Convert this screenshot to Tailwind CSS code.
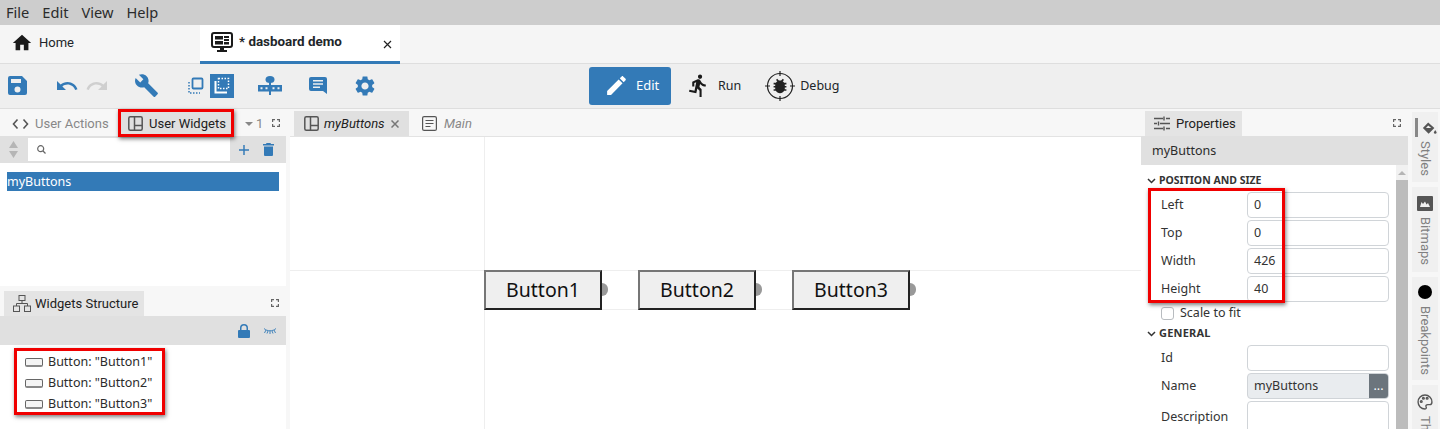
<!DOCTYPE html>
<html lang="en">
<head>
<meta charset="UTF-8">
<title>dasboard demo</title>
<script src="https://cdn.jsdelivr.net/npm/@tailwindcss/browser@4"></script>
</head>
<body class="bg-white">
<div class="relative w-[1440px] h-[429px] overflow-hidden font-['Noto_Sans',sans-serif] text-[#212529]">

  <!-- menu -->
  <div class="h-[25px] bg-[#cdcdcd] flex items-center pl-[6px] gap-[13px] text-[14.6px] text-[#2b2b2b]">
    <span>File</span><span>Edit</span><span>View</span><span>Help</span>
  </div>

  <!-- doc tabs -->
  <div class="h-[39px] bg-[#f5f5f5] border-b border-[#dedede] flex font-['Roboto',sans-serif] text-[13px]">
    <div class="w-[200px] flex items-center pl-[11px] gap-[6px] pb-[3px]">
      <svg class="w-[22px] h-[22px]" viewBox="0 0 24 24" fill="#1a1a1a"><path d="M10 20v-6h4v6h5v-8h3L12 3 2 12h3v8z"/></svg>
      <span>Home</span>
    </div>
    <div class="relative w-[200px] h-[39px] bg-white border-b-[3px] border-[#337ab7] flex items-center pl-[11px] pb-[2px] gap-[6px]">
      <svg class="w-[22px] h-[22px]" viewBox="0 0 22 22"><rect x="1" y="2" width="20" height="14" rx="2" fill="none" stroke="#1a1a1a" stroke-width="2"/><path d="M4 5h8v3.500H4zM13 5h5v2h-5zM13 8h5v2h-5zM4 10h8v3.500H4zM13 11h5v2.500h-5z" fill="#1a1a1a"/><path d="M9 16h4v3h3v2H6v-2h3z" fill="#1a1a1a"/></svg>
      <span class="font-bold text-[13.4px]">* dasboard demo</span>
      <svg class="absolute right-[8px] top-[15px] w-[9px] h-[9px]" viewBox="0 0 9 9" stroke="#222" stroke-width="1.200"><path d="M1 1l7 7M8 1l-7 7"/></svg>
    </div>
  </div>

  <!-- toolbar -->
  <div class="relative h-[45px] bg-[#efefef] border-b border-[#dedede] flex items-center pl-[7px] pb-[1px]">
    <svg class="w-[21px] h-[21px]" viewBox="0 0 21 21" fill="#337ab7"><path fill-rule="evenodd" d="M3 1h12l5 5v12a2 2 0 0 1-2 2H3a2 2 0 0 1-2-2V3a2 2 0 0 1 2-2zm1 3v4h10V4zm6.500 7.500a3 3 0 1 0 0 6 3 3 0 0 0 0-6z"/></svg>
    <svg class="w-[24px] h-[24px] ml-[27px]" viewBox="0 0 24 24" fill="#337ab7"><path d="M12.500 8c-2.650 0-5.050.99-6.900 2.600L2 7v9h9l-3.620-3.620c1.390-1.160 3.160-1.880 5.120-1.880 3.540 0 6.550 2.310 7.600 5.500l2.370-.78C21.080 11.030 17.150 8 12.500 8z"/></svg>
    <svg class="w-[24px] h-[24px] ml-[6px] -scale-x-100" viewBox="0 0 24 24" fill="#cfcfcf"><path d="M12.500 8c-2.650 0-5.050.99-6.900 2.600L2 7v9h9l-3.620-3.620c1.390-1.160 3.160-1.880 5.120-1.880 3.540 0 6.550 2.310 7.600 5.500l2.370-.78C21.080 11.030 17.150 8 12.500 8z"/></svg>
    <svg class="w-[25px] h-[25px] ml-[25px]" viewBox="0 0 24 24" fill="#337ab7"><path d="M22.700 19l-9.100-9.100c.9-2.300.4-5-1.500-6.900-2-2-5-2.400-7.400-1.300L9 6 6 9 1.600 4.700C.4 7.100.9 10.100 2.900 12.100c1.900 1.900 4.600 2.400 6.900 1.500l9.100 9.100c.4.4 1 .4 1.400 0l2.300-2.300c.5-.4.5-1.100.1-1.400z"/></svg>
    <svg class="w-[16px] h-[17px] ml-[29px]" viewBox="0 0 16 17" fill="none" stroke="#337ab7"><rect x="4.500" y="1.500" width="10" height="10" rx="1" stroke-width="1.800"/><path d="M1 5v11h11" stroke-width="1.500" stroke-dasharray="1.500 1.500"/></svg>
    <div class="w-[24px] h-[24px] ml-[6px] bg-[#337ab7] flex items-center justify-center">
      <svg class="w-[16px] h-[17px]" viewBox="0 0 16 17" fill="none" stroke="#fff"><rect x="4.500" y="1.500" width="10" height="10" stroke-width="1.500" stroke-dasharray="1.500 1.500"/><path d="M1.500 4v11.500H13" stroke-width="2"/></svg>
    </div>
    <svg class="w-[24px] h-[20px] ml-[24px]" viewBox="0 0 24 20" fill="#337ab7"><ellipse cx="12" cy="3.500" rx="4.500" ry="3.500"/><path d="M11 5h2v14h-2z"/><path fill-rule="evenodd" d="M0 9h24v6.500H0zM2.500 11.200v2h2v-2zm5 0v2h2v-2zm7 0v2h2v-2zm5 0v2h2v-2z"/></svg>
    <svg class="w-[18px] h-[19px] ml-[27px]" viewBox="0 0 18 19" fill="#337ab7"><path fill-rule="evenodd" d="M2 1h14a2 2 0 0 1 2 2v15l-4-3H2a2 2 0 0 1-2-2V3a2 2 0 0 1 2-2zm2 3v1.500h10V4zm0 3.200v1.500h10V7.200zm0 3.200v1.500h7v-1.500z"/></svg>
    <svg class="w-[24px] h-[24px] ml-[26px]" viewBox="0 0 24 24" fill="#337ab7"><path d="M19.140 12.940c.04-.3.06-.61.06-.94 0-.32-.02-.64-.07-.94l2.030-1.580c.18-.14.23-.41.12-.61l-1.920-3.320c-.12-.22-.37-.29-.59-.22l-2.390.96c-.5-.38-1.030-.7-1.620-.94l-.36-2.540c-.04-.24-.24-.41-.48-.41h-3.840c-.24 0-.43.17-.47.41l-.36 2.540c-.59.24-1.130.57-1.620.94l-2.390-.96c-.22-.08-.47 0-.59.22L2.740 8.870c-.12.21-.08.47.12.61l2.030 1.580c-.05.3-.09.63-.09.94s.02.64.07.94l-2.030 1.580c-.18.14-.23.41-.12.61l1.920 3.320c.12.22.37.29.59.22l2.390-.96c.5.38 1.030.7 1.620.94l.36 2.540c.05.24.24.41.48.41h3.840c.24 0 .44-.17.47-.41l.36-2.540c.59-.24 1.130-.56 1.620-.94l2.390.96c.22.08.47 0 .59-.22l1.920-3.320c.12-.22.07-.47-.12-.61l-2.010-1.580zM12 15.600c-1.980 0-3.600-1.620-3.600-3.600s1.620-3.600 3.600-3.600 3.600 1.620 3.600 3.600-1.620 3.600-3.600 3.600z"/></svg>

    <div class="w-[82px] h-[38px] ml-[212px] rounded-[3px] bg-[#337ab7] text-white flex items-center pl-[15px] gap-[7px] text-[13px]">
      <svg class="w-[25px] h-[25px]" viewBox="0 0 24 24" fill="#fff"><path d="M3 17.250V21h3.750L17.810 9.940l-3.750-3.750L3 17.250zM20.710 7.040c.39-.39.39-1.020 0-1.410l-2.340-2.340c-.39-.39-1.020-.39-1.410 0l-1.830 1.830 3.750 3.750 1.830-1.830z"/></svg>
      <span>Edit</span>
    </div>
    <svg class="w-[25px] h-[25px] ml-[15px]" viewBox="0 0 24 24" fill="#1a1a1a"><path d="M13.490 5.480c1.100 0 2-.9 2-2s-.9-2-2-2-2 .9-2 2 .9 2 2 2zm-3.600 13.900l1-4.400 2.100 2v6h2v-7.500l-2.100-2 .6-3c1.300 1.500 3.300 2.500 5.500 2.500v-2c-1.900 0-3.500-1-4.300-2.400l-1-1.600c-.4-.6-1-1-1.700-1-.3 0-.5.1-.8.1l-5.200 2.200v4.700h2v-3.400l1.800-.7-1.600 8.100-4.900-1-.4 2 7 1.400z"/></svg>
    <span class="ml-[7px] pt-[2px] text-[12.5px]">Run</span>
    <svg class="w-[30px] h-[30px] ml-[24px]" viewBox="0 0 30 30"><circle cx="15" cy="15" r="12.500" fill="none" stroke="#222" stroke-width="1.200"/><path d="M15 0v5M15 25v5M0 15h5M25 15h5" stroke="#222" stroke-width="1.200"/><path transform="translate(5.400 5.400) scale(.8)" fill="#222" d="M20 8h-2.810c-.45-.78-1.070-1.450-1.820-1.960L17 4.410 15.590 3l-2.170 2.170C12.960 5.060 12.490 5 12 5c-.49 0-.96.06-1.410.17L8.410 3 7 4.410l1.620 1.630C7.880 6.550 7.260 7.220 6.810 8H4v2h2.090c-.05.33-.09.66-.09 1v1H4v2h2v1c0 .34.04.67.09 1H4v2h2.810c1.040 1.790 2.970 3 5.190 3s4.150-1.210 5.190-3H20v-2h-2.090c.05-.33.09-.66.09-1v-1h2v-2h-2v-1c0-.34-.04-.67-.09-1H20V8z"/></svg>
    <span class="ml-[5px] pt-[2px] text-[12.5px]">Debug</span>
  </div>

  <!-- main -->
  <div class="flex h-[320px] bg-[#f7f7f7]">

    <!-- left -->
    <div class="w-[290px] shrink-0 flex flex-col">
      <div class="h-[27px] flex items-end font-['Roboto',sans-serif] text-[13px] w-[286px]">
        <div class="w-[119px] h-[25px] flex items-center pl-[12px] gap-[6px] text-[#888]">
          <svg class="w-[17px] h-[12px]" viewBox="0 0 17 12" fill="none" stroke="#555" stroke-width="1.600"><path d="M5.500 1.500L1.500 6l4 4.500M11.500 1.500l4 4.500-4 4.500"/></svg>
          <span>User Actions</span>
        </div>
        <div class="w-[115px] h-[25px] bg-[#e0e0e0] flex items-center pl-[9px] gap-[6px] text-[#212121]">
          <svg class="w-[15px] h-[15px]" viewBox="0 0 15 15" fill="none" stroke="#555" stroke-width="1.500"><rect x=".8" y=".8" width="13.400" height="13.400" rx="1.500"/><path d="M6.500 1v13M6.500 9.500H14"/></svg>
          <span>User Widgets</span>
        </div>
        <div class="h-[25px] flex items-center pl-[11px] text-[#888] gap-[3px]">
          <span class="w-0 h-0 border-x-[4px] border-x-transparent border-t-[4px] border-t-[#888]"></span><span>1</span>
        </div>
        <svg class="w-[8px] h-[8px] ml-[9px] mb-[9px]" viewBox="0 0 8 8" fill="none" stroke="#666" stroke-width="1.200"><path d="M.6 3V.6H3M5 .6h2.400V3M7.400 5v2.400H5M3 7.400H.6V5"/></svg>
      </div>
      <div class="w-[286px] h-[27px] bg-[#e0e0e0] flex items-center pl-[8px]">
        <svg class="w-[11px] h-[19px]" viewBox="0 0 11 19" fill="#b5b5b5"><path d="M5.500 1l4.500 7H1zM5.500 18l4.500-7H1z"/></svg>
        <div class="w-[202px] h-[23px] ml-[9px] bg-white flex items-center pl-[9px]">
          <svg class="w-[9px] h-[9px]" viewBox="0 0 9 9" fill="none" stroke="#666" stroke-width="1.200"><circle cx="3.700" cy="3.700" r="3"/><path d="M6 6l2.500 2.500"/></svg>
        </div>
        <svg class="w-[10px] h-[10px] ml-[9px]" viewBox="0 0 11 11" stroke="#337ab7" stroke-width="1.600"><path d="M5.500 0v11M0 5.500h11"/></svg>
        <svg class="w-[11px] h-[13px] ml-[14px]" viewBox="0 0 11 13" fill="#337ab7"><path d="M3.500 0h4l.5 1h3v1.500H0V1h3zM1 3.500h9V12a1 1 0 0 1-1 1H2a1 1 0 0 1-1-1z"/></svg>
      </div>
      <div class="w-[286px] h-[123px] bg-white pt-[9px] pl-[7px]">
        <div class="w-[272px] h-[19px] bg-[#337ab7] text-white text-[12.5px] leading-[19px]">myButtons</div>
      </div>
      <div class="w-[286px] h-[5px]"></div>
      <div class="w-[286px] h-[25px] flex justify-between items-end pl-[4px] pr-[7px] font-['Roboto',sans-serif] text-[13px] text-[#212121]">
        <div class="w-[140px] h-[25px] bg-[#e4e4e4] flex items-center pl-[9px] gap-[4px]">
          <svg class="w-[18px] h-[17px]" viewBox="0 0 18 17" fill="none" stroke="#555"><rect x="6" y=".5" width="6" height="5"/><rect x=".5" y="11" width="6" height="5.500"/><rect x="11.500" y="11" width="6" height="5.500"/><path d="M9 5.500v3M3.500 11V8.500h11V11"/></svg>
          <span>Widgets Structure</span>
        </div>
        <svg class="w-[8px] h-[8px] mb-[9px]" viewBox="0 0 8 8" fill="none" stroke="#666" stroke-width="1.200"><path d="M.6 3V.6H3M5 .6h2.400V3M7.400 5v2.400H5M3 7.400H.6V5"/></svg>
      </div>
      <div class="w-[286px] h-[29px] bg-[#e0e0e0] flex items-center justify-end pr-[9px] gap-[13px]">
        <svg class="w-[12px] h-[14px]" viewBox="0 0 12 14" fill="#337ab7"><path fill-rule="evenodd" d="M2 6V4a4 4 0 0 1 8 0v2h1a1 1 0 0 1 1 1v6a1 1 0 0 1-1 1H1a1 1 0 0 1-1-1V7a1 1 0 0 1 1-1zm1.500 0h5V4a2.500 2.500 0 0 0-5 0z"/></svg>
        <svg class="w-[14px] h-[7px]" viewBox="0 0 14 7" fill="none" stroke="#337ab7" stroke-width=".9"><path d="M1 1.500c3 3 9 3 12 0M3 3L1.500 6M7 4v3M11 3l1.500 3M5 4L4 6.500M9 4l1 2.500"/></svg>
      </div>
      <div class="w-[286px] flex-1 bg-white pt-[7px] pl-[25px] text-[12.5px] text-[#2b2b2b]">
        <div class="h-[21px] flex items-center gap-[5px]"><span class="w-[18px] h-[9px] rounded-[2px] border border-[#666] border-b-2 border-b-[#888] bg-[#f4f4f4]"></span><span>Button: "Button1"</span></div>
        <div class="h-[21px] flex items-center gap-[5px]"><span class="w-[18px] h-[9px] rounded-[2px] border border-[#666] border-b-2 border-b-[#888] bg-[#f4f4f4]"></span><span>Button: "Button2"</span></div>
        <div class="h-[21px] flex items-center gap-[5px]"><span class="w-[18px] h-[9px] rounded-[2px] border border-[#666] border-b-2 border-b-[#888] bg-[#f4f4f4]"></span><span>Button: "Button3"</span></div>
      </div>
    </div>

    <!-- center -->
    <div class="w-[851px] shrink-0 flex flex-col">
      <div class="h-[28px] flex items-end pl-[4px] font-['Roboto',sans-serif] text-[13px] italic border-b border-[#e3e3e3]">
        <div class="w-[115px] h-[25px] bg-[#e0e0e0] flex items-center pl-[10px] gap-[5px] text-[#212121]">
          <svg class="w-[15px] h-[15px]" viewBox="0 0 15 15" fill="none" stroke="#555" stroke-width="1.500"><rect x=".8" y=".8" width="13.400" height="13.400" rx="1.500"/><path d="M6.500 1v13M6.500 9.500H14"/></svg>
          <span>myButtons</span>
          <svg class="w-[8px] h-[8px] ml-[1px]" viewBox="0 0 8 8" stroke="#777" stroke-width="1.500"><path d="M.5.5l7 7M7.500.5l-7 7"/></svg>
        </div>
        <div class="h-[25px] flex items-center pl-[13px] gap-[7px] text-[#888]">
          <svg class="w-[15px] h-[15px]" viewBox="0 0 15 15" fill="none" stroke="#555" stroke-width="1.200"><rect x=".6" y=".6" width="13.800" height="13.800" rx="1.500"/><path d="M3.500 4.500h8M3.500 7.500h8M3.500 10.500h5"/></svg>
          <span>Main</span>
        </div>
      </div>
      <div class="relative flex-1 bg-white">
        <div class="absolute left-[194px] top-0 bottom-0 w-px bg-[#eeeeee]"></div>
        <div class="absolute left-0 right-0 top-[133px] h-px bg-[#eeeeee]"></div>
        <div class="absolute left-[194px] w-[426px] top-[172px] h-px bg-[#eeeeee]"></div>
        <div class="absolute left-[194px] top-[133px] flex gap-[36px] text-[19.5px]">
          <div class="relative w-[118px] h-[40px] bg-[#efefef] border-2 border-t-[#767676] border-l-[#767676] border-r-[#222] border-b-[#222] flex items-center justify-center text-[#111]">Button1<span class="absolute right-[-8px] top-[11px] w-[6px] h-[13px] rounded-r-full bg-[#999]"></span></div>
          <div class="relative w-[118px] h-[40px] bg-[#efefef] border-2 border-t-[#767676] border-l-[#767676] border-r-[#222] border-b-[#222] flex items-center justify-center text-[#111]">Button2<span class="absolute right-[-8px] top-[11px] w-[6px] h-[13px] rounded-r-full bg-[#999]"></span></div>
          <div class="relative w-[118px] h-[40px] bg-[#efefef] border-2 border-t-[#767676] border-l-[#767676] border-r-[#222] border-b-[#222] flex items-center justify-center text-[#111]">Button3<span class="absolute right-[-8px] top-[11px] w-[6px] h-[13px] rounded-r-full bg-[#999]"></span></div>
        </div>
      </div>
    </div>

    <!-- properties -->
    <div class="w-[267px] shrink-0 flex flex-col">
      <div class="h-[27px] flex justify-between items-end pl-[4px] pr-[7px]">
        <div class="w-[97px] h-[25px] bg-[#e4e4e4] flex items-center pl-[9px] gap-[6px] font-['Roboto',sans-serif] text-[13px] text-[#212121]">
          <svg class="w-[16px] h-[15px]" viewBox="0 0 16 15" stroke="#555" stroke-width="1.400" fill="none"><path d="M0 2.500h9M12 2.500h4M10 .5v4M0 7.500h3M6 7.500h10M4.500 5.500v4M0 12.500h9M12 12.500h4M10 10.500v4"/></svg>
          <span>Properties</span>
        </div>
        <svg class="w-[8px] h-[8px] mb-[9px]" viewBox="0 0 8 8" fill="none" stroke="#666" stroke-width="1.200"><path d="M.6 3V.6H3M5 .6h2.400V3M7.400 5v2.400H5M3 7.400H.6V5"/></svg>
      </div>
      <div class="h-[29px] bg-[#e0e0e0] pl-[11px] pt-[2px] flex items-center text-[12.5px] text-[#2b2b2b]">myButtons</div>
      <div class="relative flex-1 bg-white pl-[6px] text-[12.5px] text-[#333] overflow-hidden">
        <div class="absolute right-0 top-0 bottom-0 w-[12px] bg-[#f1f1f1] flex flex-col items-center pt-[6px]">
          <span class="w-0 h-0 border-x-[4px] border-x-transparent border-b-[4px] border-b-[#b5b5b5]"></span>
          <span class="w-full flex-1 mt-[5px] bg-[#bcbcbc]"></span>
        </div>
        <div class="h-[26px] flex items-center gap-[3px] text-[10.5px] font-bold pt-[6px]">
          <svg class="w-[9px] h-[6px]" viewBox="0 0 9 6" fill="none" stroke="#333" stroke-width="1.500"><path d="M1 1l3.500 3.500L8 1"/></svg>
          <span>POSITION AND SIZE</span>
        </div>
        <div class="flex items-center h-[28px] pl-[14px]"><span class="w-[86px]">Left</span><span class="w-[142px] h-[26px] bg-white border border-[#d0d4d8] rounded-[4px] pl-[6px] leading-[24px]">0</span></div>
        <div class="flex items-center h-[28px] pl-[14px]"><span class="w-[86px]">Top</span><span class="w-[142px] h-[26px] bg-white border border-[#d0d4d8] rounded-[4px] pl-[6px] leading-[24px]">0</span></div>
        <div class="flex items-center h-[28px] pl-[14px]"><span class="w-[86px]">Width</span><span class="w-[142px] h-[26px] bg-white border border-[#d0d4d8] rounded-[4px] pl-[6px] leading-[24px]">426</span></div>
        <div class="flex items-center h-[28px] pl-[14px]"><span class="w-[86px]">Height</span><span class="w-[142px] h-[26px] bg-white border border-[#d0d4d8] rounded-[4px] pl-[6px] leading-[24px]">40</span></div>
        <div class="flex items-center h-[20px] pl-[14px] gap-[6px]"><span class="w-[13px] h-[13px] border border-[#b8bcc0] rounded-[3px]"></span><span>Scale to fit</span></div>
        <div class="h-[21px] flex items-center gap-[3px] text-[11px] font-bold tracking-[.2px]">
          <svg class="w-[9px] h-[6px]" viewBox="0 0 9 6" fill="none" stroke="#333" stroke-width="1.500"><path d="M1 1l3.500 3.500L8 1"/></svg>
          <span>GENERAL</span>
        </div>
        <div class="flex items-center h-[28px] pl-[14px]"><span class="w-[86px]">Id</span><span class="w-[142px] h-[26px] bg-white border border-[#d0d4d8] rounded-[4px]"></span></div>
        <div class="flex items-center h-[28px] pl-[14px]"><span class="w-[86px]">Name</span>
          <span class="w-[142px] h-[26px] bg-[#e9ecef] border border-[#d0d4d8] rounded-[4px] pl-[6px] leading-[24px] flex justify-between overflow-hidden"><span>myButtons</span><span class="w-[19px] -my-px bg-[#6c757d] text-white text-center leading-[26px]">...</span></span>
        </div>
        <div class="flex items-start h-[50px] pl-[14px] pt-[1px]"><span class="w-[86px] pt-[7px]">Description</span><span class="w-[142px] h-[50px] bg-white border border-[#d0d4d8] rounded-[4px]"></span></div>
      </div>
    </div>

    <!-- side tabs -->
    <div class="flex-1 pl-[4px] pt-[3px] flex flex-col gap-[5px] font-['Roboto',sans-serif] text-[13px] text-[#808080]">
      <div class="w-[26px] h-[70px] shrink-0 bg-[#f0f0f0] relative flex flex-col items-center pt-[10px]">
        <span class="absolute left-[3px] top-[6px] w-[3px] h-[19px] bg-[#888]"></span>
        <svg class="w-[15px] h-[14px] ml-[8px] shrink-0" viewBox="0 0 17 15" fill="#555"><path fill-rule="evenodd" d="M7 0l7 6.500-6.500 6.500-6.500-6.500zm0 3.500L4.500 6.500h6z"/><path d="M15 8.500c1 1.500 1.500 2.300 1.500 3a1.500 1.500 0 0 1-3 0c0-.7.5-1.500 1.500-3z"/></svg>
        <span class="[writing-mode:vertical-rl] mt-[5px] leading-[20px]">Styles</span>
      </div>
      <div class="w-[26px] h-[85px] shrink-0 bg-[#f0f0f0] flex flex-col items-center pt-[9px]">
        <svg class="w-[16px] h-[15px] shrink-0" viewBox="0 0 16 15" fill="#555"><path fill-rule="evenodd" d="M1 0h14a1 1 0 0 1 1 1v13a1 1 0 0 1-1 1H1a1 1 0 0 1-1-1V1a1 1 0 0 1 1-1zm2 11h10l-2-4-1.500 1.500L8 5.500 6 8 4.500 6z"/></svg>
        <span class="[writing-mode:vertical-rl] mt-[6px] leading-[20px]">Bitmaps</span>
      </div>
      <div class="w-[26px] h-[103px] shrink-0 bg-[#f0f0f0] flex flex-col items-center pt-[8px]">
        <span class="w-[14px] h-[14px] shrink-0 rounded-full bg-black"></span>
        <span class="[writing-mode:vertical-rl] mt-[7px] leading-[20px]">Breakpoints</span>
      </div>
      <div class="w-[26px] flex-1 bg-[#f0f0f0] flex flex-col items-center pt-[9px] overflow-hidden">
        <svg class="w-[16px] h-[16px] shrink-0" viewBox="0 0 15 15" fill="none" stroke="#555" stroke-width="1.300"><path d="M7.500 1a6.500 6.500 0 1 0 0 13c1.200 0 1.500-1 1-2-.5-1.200.3-2 1.500-2h2c1.300 0 2-1 2-2.500C14 3.500 11 1 7.500 1z"/><circle cx="4" cy="7" r=".8"/><circle cx="6" cy="4" r=".8"/><circle cx="9.500" cy="4" r=".8"/></svg>
        <span class="[writing-mode:vertical-rl] mt-[6px] leading-[20px]">Themes</span>
      </div>
    </div>
  </div>

  <!-- red annotation boxes drawn over the screenshot -->
  <div class="absolute left-[118px] top-[109px] w-[116px] h-[28px] border-[3px] border-[#f00000] shadow-[1px_2px_4px_rgba(0,0,0,.5)]"></div>
  <div class="absolute left-[14px] top-[348px] w-[151px] h-[67px] border-[3px] border-[#f00000] shadow-[1px_2px_4px_rgba(0,0,0,.5)]"></div>
  <div class="absolute left-[1148px] top-[188px] w-[137px] h-[115px] border-[3px] border-[#f00000] shadow-[1px_2px_4px_rgba(0,0,0,.5)]"></div>
</div>
</body>
</html>
